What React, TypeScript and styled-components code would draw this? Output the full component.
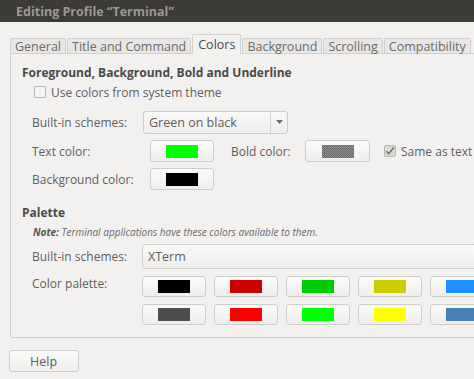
import styled, { createGlobalStyle } from "styled-components";

const GlobalStyle = createGlobalStyle`
  html, body {
    margin: 0;
    padding: 0;
    background: #f2f1f0;
    overflow: hidden;
  }
  body {
    font-family: "Open Sans", "Noto Sans", sans-serif;
    font-size: 12px;
    color: #5f5f5f;
  }
`;

const Window = styled.div`
  width: 560px;
  height: 379px;
  display: flex;
  flex-direction: column;
  background: #f2f1f0;
`;

const TitleBar = styled.div`
  height: 22px;
  flex: none;
  background: #3c3b37;
  color: #9b9893;
  font-weight: 700;
  font-size: 12.5px;
  display: flex;
  align-items: center;
  padding-left: 16px;
`;

const Body = styled.div`
  padding: 11px 0 0 10px;
  display: flex;
  flex-direction: column;
`;

const TabRow = styled.div`
  display: flex;
  align-items: flex-end;
  height: 20px;
  position: relative;
  z-index: 1;
`;

const Tab = styled.div<{ $active?: boolean }>`
  height: ${(p) => (p.$active ? "20px" : "16px")};
  box-sizing: border-box;
  padding: 0 ${(p) => (p.$active ? "5px" : "4px")};
  display: flex;
  align-items: center;
  font-size: 12.5px;
  color: ${(p) => (p.$active ? "#4c4c4c" : "#6a6a6a")};
  background: ${(p) => (p.$active ? "#f2f1f0" : "#e8e7e5")};
  border: 1px solid #d2d0cd;
  border-bottom: ${(p) => (p.$active ? "1px solid #f2f1f0" : "1px solid #d2d0cd")};
  margin-right: 1px;
  border-radius: 2px 2px 0 0;
  margin-bottom: -1px;
  white-space: nowrap;
`;

const Panel = styled.div`
  border: 1px solid #d2d0cd;
  border-radius: 0 2px 2px 2px;
  height: 285px;
  box-sizing: border-box;
  padding: 10px 0 0 11px;
  display: flex;
  flex-direction: column;
`;

const Heading = styled.div`
  font-weight: 700;
  font-size: 12px;
  color: #4a4a4a;
  height: 18px;
  line-height: 18px;
`;

const Section = styled.div`
  padding-left: 10px;
  display: flex;
  flex-direction: column;
`;

const Row = styled.div<{ $h: number; $mt?: number }>`
  display: flex;
  align-items: center;
  height: ${(p) => p.$h}px;
  margin-top: ${(p) => p.$mt ?? 0}px;
`;

const Label = styled.div<{ $w?: number }>`
  width: ${(p) => p.$w ?? 118}px;
  flex: none;
  white-space: nowrap;
`;

const CheckBox = styled.div<{ $checked?: boolean }>`
  width: 12px;
  height: 12px;
  box-sizing: border-box;
  border: 1px solid #b9b7b3;
  border-radius: 2px;
  background: ${(p) => (p.$checked ? "#dcdad7" : "#f6f6f5")};
  margin-right: 5px;
  display: flex;
  align-items: center;
  justify-content: center;
  flex: none;
`;

const Button = styled.div<{ $w: number; $h?: number }>`
  width: ${(p) => p.$w}px;
  height: ${(p) => p.$h ?? 22}px;
  box-sizing: border-box;
  border: 1px solid #cfcdca;
  border-radius: 3px;
  background: linear-gradient(#fbfbfa, #efeeed);
  display: flex;
  align-items: center;
  justify-content: center;
  flex: none;
`;

const Swatch = styled.div<{ $color: string; $dither?: boolean }>`
  width: 32px;
  height: 13px;
  background: ${(p) =>
    p.$dither
      ? "repeating-conic-gradient(#6e6e6e 0 25%, #8a8a8a 0 50%) 0 0 / 2px 2px"
      : p.$color};
`;

const Combo = styled.div<{ $w: number; $h: number }>`
  width: ${(p) => p.$w}px;
  height: ${(p) => p.$h}px;
  box-sizing: border-box;
  border: 1px solid #cfcdca;
  border-radius: 3px;
  background: linear-gradient(#f9f9f8, #efeeed);
  display: flex;
  align-items: center;
  color: #5f5f5f;
  font-size: 12.5px;
  flex: none;
`;

const ComboText = styled.div`
  flex: 1;
  padding-left: 5px;
`;

const ComboArrow = styled.div`
  width: 16px;
  height: 100%;
  border-left: 1px solid #d6d4d1;
  display: flex;
  align-items: center;
  justify-content: center;
`;

const Note = styled.div`
  font-style: italic;
  font-size: 10px;
  color: #6a6a6a;
  height: 18px;
  line-height: 18px;
  padding-left: 11px;
  margin-top: 1px;

  & b {
    color: #555;
  }
`;

const PaletteGrid = styled.div`
  display: grid;
  grid-template-columns: repeat(5, 64px);
  column-gap: 8px;
  row-gap: 7px;
`;

const Footer = styled.div`
  padding: 12px 0 0 0;
  margin-left: -1px;
`;

const HelpButton = styled(Button)`
  justify-content: flex-start;
  padding-left: 20px;
  font-size: 12.5px;
  color: #5f5f5f;
`;

const tabs = [
  "General",
  "Title and Command",
  "Colors",
  "Background",
  "Scrolling",
  "Compatibility",
];

const palette = [
  "#000000",
  "#cd0000",
  "#00cd00",
  "#cdcd00",
  "#1e90ff",
  "#4d4d4d",
  "#ff0000",
  "#00ff00",
  "#ffff00",
  "#4682b4",
];

function Tick() {
  return (
    <svg width="11" height="10" viewBox="0 0 11 10">
      <path
        d="M1.5 5.2 L4.2 8 L9.8 1.2"
        fill="none"
        stroke="#6d6d6d"
        strokeWidth="1.6"
      />
    </svg>
  );
}

function Arrow() {
  return (
    <svg width="7" height="4" viewBox="0 0 7 4">
      <path d="M0 0 H7 L3.5 4 Z" fill="#6d6d6d" />
    </svg>
  );
}

export default function App() {
  return (
    <Window>
      <GlobalStyle />
      <TitleBar>Editing Profile “Terminal”</TitleBar>
      <Body>
        <TabRow>
          {tabs.map((t) => (
            <Tab key={t} $active={t === "Colors"}>
              {t}
            </Tab>
          ))}
        </TabRow>
        <Panel>
          <Heading>Foreground, Background, Bold and Underline</Heading>
          <Section>
            <Row $h={20} $mt={0}>
              <CheckBox style={{ marginLeft: 2 }} />
              Use colors from system theme
            </Row>
            <Row $h={24} $mt={8}>
              <Label $w={111}>Built-in schemes:</Label>
              <Combo $w={145} $h={23}>
                <ComboText>Green on black</ComboText>
                <ComboArrow>
                  <Arrow />
                </ComboArrow>
              </Combo>
            </Row>
            <Row $h={22} $mt={6}>
              <Label>Text color:</Label>
              <Button $w={64}>
                <Swatch $color="#00ff00" />
              </Button>
              <Label $w={74} style={{ marginLeft: 17 }}>
                Bold color:
              </Label>
              <Button $w={65}>
                <Swatch $color="#777" $dither />
              </Button>
              <CheckBox $checked style={{ marginLeft: 14 }}>
                <Tick />
              </CheckBox>
              Same as text color
            </Row>
            <Row $h={22} $mt={6}>
              <Label>Background color:</Label>
              <Button $w={64}>
                <Swatch $color="#000000" />
              </Button>
            </Row>
          </Section>
          <Heading style={{ marginTop: 14 }}>Palette</Heading>
          <Note>
            <b>Note:</b> Terminal applications have these colors available to
            them.
          </Note>
          <Section>
            <Row $h={25} $mt={3}>
              <Label $w={110}>Built-in schemes:</Label>
              <Combo $w={400} $h={25}>
                <ComboText>XTerm</ComboText>
              </Combo>
            </Row>
            <Row $h={48} $mt={7} style={{ alignItems: "flex-start" }}>
              <Label $w={110} style={{ marginTop: -1 }}>
                Color palette:
              </Label>
              <PaletteGrid>
                {palette.map((c, i) => (
                  <Button key={i} $w={64} $h={21}>
                    <Swatch $color={c} />
                  </Button>
                ))}
              </PaletteGrid>
            </Row>
          </Section>
        </Panel>
        <Footer>
          <HelpButton $w={70}>Help</HelpButton>
        </Footer>
      </Body>
    </Window>
  );
}
